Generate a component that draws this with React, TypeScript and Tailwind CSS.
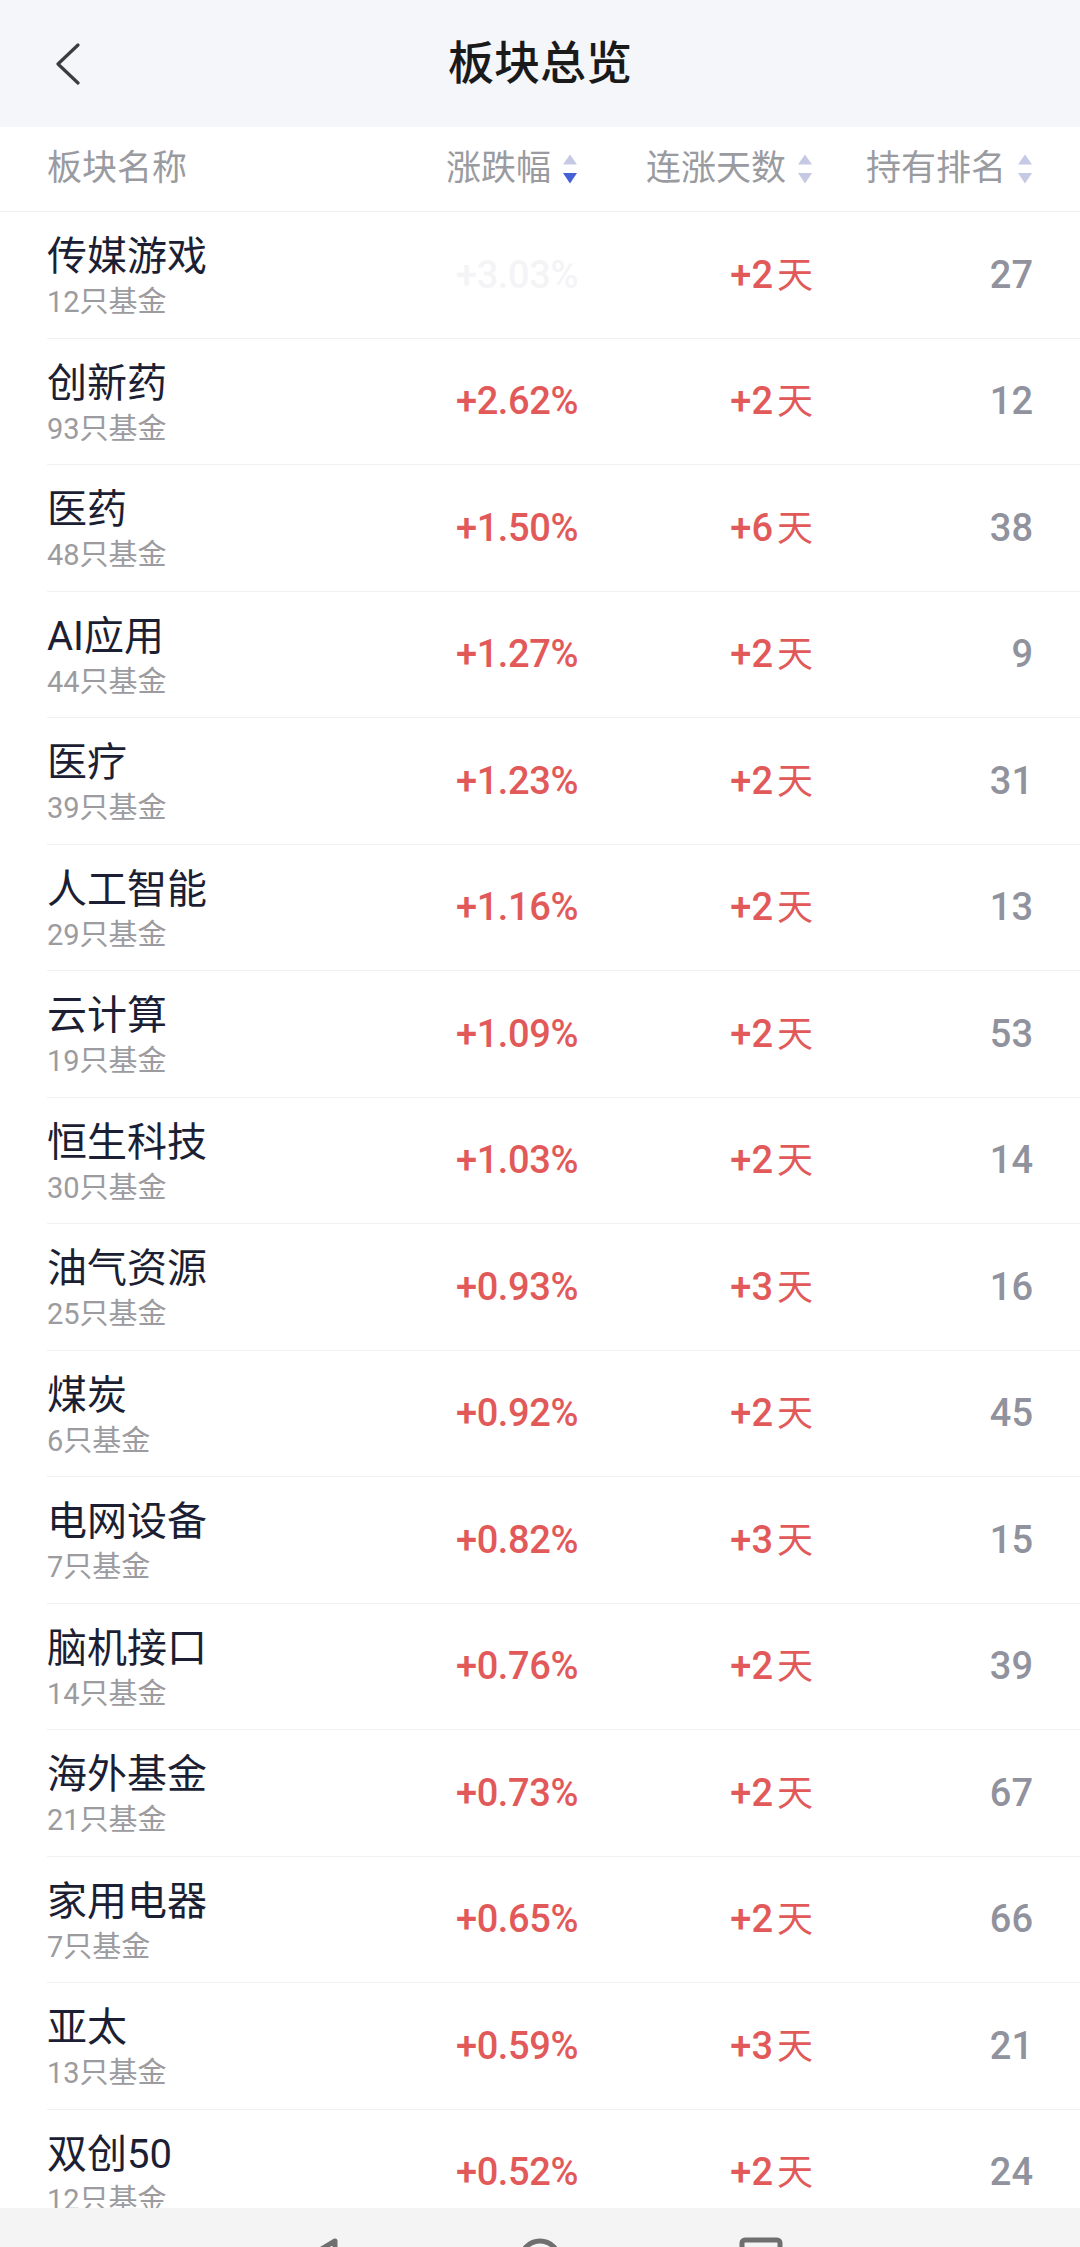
import React from 'react';

type Sector = {
  name: string;
  funds: number;
  change: string;
  days: number;
  rank: number;
  faded?: boolean;
};

const sectors: Sector[] = [
  { name: '传媒游戏', funds: 12, change: '+3.03%', days: 2, rank: 27, faded: true },
  { name: '创新药', funds: 93, change: '+2.62%', days: 2, rank: 12 },
  { name: '医药', funds: 48, change: '+1.50%', days: 6, rank: 38 },
  { name: 'AI应用', funds: 44, change: '+1.27%', days: 2, rank: 9 },
  { name: '医疗', funds: 39, change: '+1.23%', days: 2, rank: 31 },
  { name: '人工智能', funds: 29, change: '+1.16%', days: 2, rank: 13 },
  { name: '云计算', funds: 19, change: '+1.09%', days: 2, rank: 53 },
  { name: '恒生科技', funds: 30, change: '+1.03%', days: 2, rank: 14 },
  { name: '油气资源', funds: 25, change: '+0.93%', days: 3, rank: 16 },
  { name: '煤炭', funds: 6, change: '+0.92%', days: 2, rank: 45 },
  { name: '电网设备', funds: 7, change: '+0.82%', days: 3, rank: 15 },
  { name: '脑机接口', funds: 14, change: '+0.76%', days: 2, rank: 39 },
  { name: '海外基金', funds: 21, change: '+0.73%', days: 2, rank: 67 },
  { name: '家用电器', funds: 7, change: '+0.65%', days: 2, rank: 66 },
  { name: '亚太', funds: 13, change: '+0.59%', days: 3, rank: 21 },
  { name: '双创50', funds: 12, change: '+0.52%', days: 2, rank: 24 },
];

const FONT = { fontFamily: "Roboto, 'Noto Sans CJK SC', sans-serif" };

function SortIcon({ active }: { active?: boolean }) {
  return (
    <svg width="16" height="30" viewBox="0 0 16 30" className="shrink-0">
      <path d="M8 0.5 L15 10.5 L1 10.5 Z" fill="#c6c9e4" />
      <path d="M1 19 L15 19 L8 29.5 Z" fill={active ? '#4661d8' : '#c6c9e4'} />
    </svg>
  );
}

function SectorRow({ s }: { s: Sector }) {
  return (
    <div className="ml-[47px] flex h-[126.5px] shrink-0 items-center border-b border-[#f1f1f4] pr-[47px]">
      <div className="flex flex-1 flex-col self-stretch pt-[23px]">
        <span className="text-[40px] leading-[44px] text-[#1c1f33]">{s.name}</span>
        <span className="mt-[5px] text-[29px] leading-[36px] text-[#9b9ba0]">{s.funds}只基金</span>
      </div>
      <div
        className={`w-[200px] text-right text-[38px] font-medium leading-none tracking-[-0.4px] ${
          s.faded ? 'text-[#f4f4f6]' : 'text-[#e2595a]'
        }`}
      >
        {s.change}
      </div>
      <div className="w-[235px] text-right text-[38px] font-medium leading-none text-[#e2595a]">
        +{s.days}
        <span className="ml-[4px] text-[36px] font-normal">天</span>
      </div>
      <div className="w-[220px] text-right text-[38px] font-medium leading-none text-[#90929d]">{s.rank}</div>
    </div>
  );
}

export default function App() {
  return (
    <div className="flex h-[2247px] w-[1080px] flex-col overflow-hidden bg-white" style={FONT}>
      {/* Title bar */}
      <div className="relative flex h-[127px] shrink-0 items-center justify-center bg-[#f5f6fa]">
        <svg width="26" height="42" viewBox="0 0 26 42" className="absolute left-[55px] top-[43px]">
          <polyline points="23,2 3,21 23,40" fill="none" stroke="#3c3c40" strokeWidth="3.2" strokeLinecap="round" strokeLinejoin="round" />
        </svg>
        <span className="text-[46px] font-medium text-[#1a1a1a]">板块总览</span>
      </div>

      {/* Column header */}
      <div className="flex h-[85px] shrink-0 items-center border-b border-[#eeeef1] px-[47px] text-[35px] text-[#9a9ba1]">
        <div className="flex-1">板块名称</div>
        <div className="flex w-[200px] items-center justify-end gap-[11px]">
          涨跌幅
          <SortIcon active />
        </div>
        <div className="flex w-[235px] items-center justify-end gap-[11px]">
          连涨天数
          <SortIcon />
        </div>
        <div className="flex w-[220px] items-center justify-end gap-[11px]">
          持有排名
          <SortIcon />
        </div>
      </div>

      {/* List */}
      <div className="flex flex-1 flex-col overflow-hidden">
        {sectors.map((s) => (
          <SectorRow key={s.name} s={s} />
        ))}
      </div>

      {/* System nav bar */}
      <div className="flex h-[39px] shrink-0 items-start justify-center gap-[176px] overflow-hidden bg-[#f4f4f4] pt-[29px]">
        <svg width="44" height="46" viewBox="0 0 44 46">
          <path d="M38 4 L6 23 L38 42 Z" fill="none" stroke="#6f6f6f" strokeWidth="5" strokeLinejoin="round" />
        </svg>
        <svg width="46" height="46" viewBox="0 0 46 46">
          <circle cx="23" cy="23" r="19" fill="none" stroke="#6f6f6f" strokeWidth="5" />
        </svg>
        <svg width="44" height="44" viewBox="0 0 44 44">
          <rect x="3" y="3" width="38" height="38" rx="3" fill="none" stroke="#6f6f6f" strokeWidth="5" />
        </svg>
      </div>
    </div>
  );
}
